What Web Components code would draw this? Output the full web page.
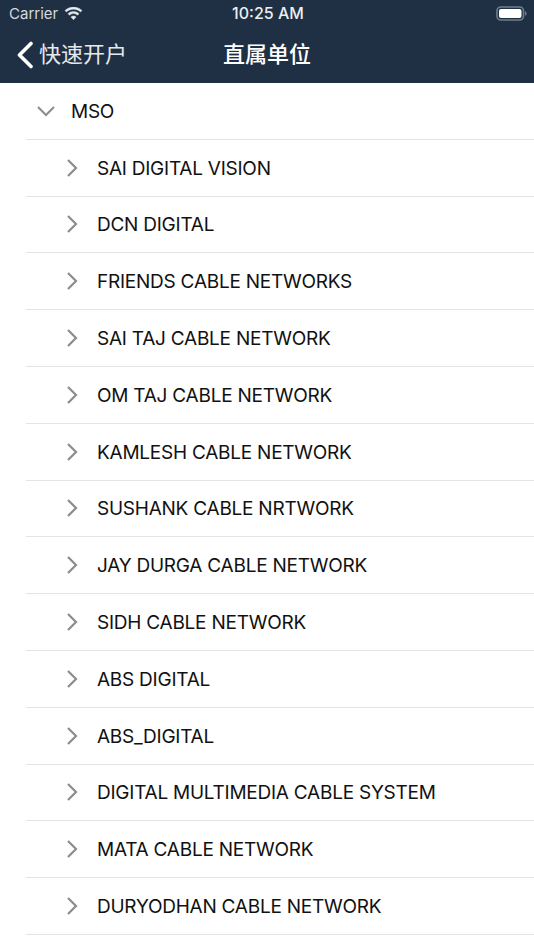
<!DOCTYPE html>
<html>
<head>
<meta charset="utf-8">
<style>
  html, body { margin: 0; background: #fff; }
  body { font-family: Inter, "Noto Sans CJK SC", sans-serif; height: 950px; overflow: hidden; }
</style>
</head>
<body>
<app-header title="直属单位" back="快速开户"></app-header>
<tree-list>
  <tree-row level="0" open>MSO</tree-row>
  <tree-row>SAI DIGITAL VISION</tree-row>
  <tree-row>DCN DIGITAL</tree-row>
  <tree-row>FRIENDS CABLE NETWORKS</tree-row>
  <tree-row>SAI TAJ CABLE NETWORK</tree-row>
  <tree-row>OM TAJ CABLE NETWORK</tree-row>
  <tree-row>KAMLESH CABLE NETWORK</tree-row>
  <tree-row>SUSHANK CABLE NRTWORK</tree-row>
  <tree-row>JAY DURGA CABLE NETWORK</tree-row>
  <tree-row>SIDH CABLE NETWORK</tree-row>
  <tree-row>ABS DIGITAL</tree-row>
  <tree-row>ABS_DIGITAL</tree-row>
  <tree-row>DIGITAL MULTIMEDIA CABLE SYSTEM</tree-row>
  <tree-row>MATA CABLE NETWORK</tree-row>
  <tree-row>DURYODHAN CABLE NETWORK</tree-row>
</tree-list>
<script>
class AppHeader extends HTMLElement {
  connectedCallback() {
    this.attachShadow({ mode: 'open' });
    this.shadowRoot.innerHTML = `
      <style>
        :host { display: block; height: 83px; background: #1f3044; color: #fff; }
        .status { height: 26px; display: grid; grid-template-columns: 1fr auto 1fr; align-items: center; padding: 0 7px 0 9px; font-size: 16px; }
        .left { display: flex; align-items: center; gap: 6px; color: #d5dade; font-size: 15px; }
        .left svg { margin-top: 2px; }
        .time { font-weight: 500; color: #eceef0; }
        .right { display: flex; justify-content: flex-end; }
        .nav { height: 57px; display: grid; grid-template-columns: 1fr auto 1fr; align-items: center; padding: 0 16px; }
        .back { display: flex; align-items: center; gap: 3px; font-size: 22px; color: #e6e9ec; }
        .back span, .title { padding-bottom: 6px; }
        .title { font-size: 22px; font-weight: 500; }
        svg { display: block; }
      </style>
      <div class="status">
        <div class="left">Carrier
          <svg width="19" height="14" viewBox="0 0 19 14"><path fill="#e8ebed" stroke="#e8ebed" stroke-width=".4" d="M9.5 2.2c2.7 0 5.2 1 7.1 2.8l1.4-1.5C15.700 1.300 12.700 0 9.500 0S3.300 1.300 1 3.500L2.400 5C4.300 3.200 6.800 2.200 9.500 2.200zM9.500 6.600c1.500 0 2.900.6 4 1.600l1.500-1.500C13.500 5.300 11.600 4.500 9.500 4.500s-4 .8-5.500 2.200l1.500 1.500c1.100-1 2.500-1.600 4-1.600zM9.500 9c-1 0-1.900.4-2.600 1l2.600 2.800L12.100 10c-.7-.6-1.600-1-2.600-1z"/></svg>
        </div>
        <div class="time">10:25 AM</div>
        <div class="right">
          <svg width="31" height="15" viewBox="0 0 31 15"><rect x="1" y="1" width="26.500" height="13" rx="3.800" fill="none" stroke="#6f7d8c" stroke-width="1.600"/><rect x="3" y="3" width="22.500" height="9" rx="2" fill="#fff"/><path d="M29 5.200c1 .3 1.500 1.200 1.500 2.300s-.5 2-1.500 2.300z" fill="#6f7d8c"/></svg>
        </div>
      </div>
      <div class="nav">
        <div class="back">
          <svg width="20" height="28" viewBox="0 0 20 28"><path d="M15 2.500 3.500 14 15 25.500" fill="none" stroke="#fff" stroke-width="3.600" stroke-linecap="round" stroke-linejoin="round"/></svg>
          <span>${this.getAttribute('back')}</span>
        </div>
        <div class="title">${this.getAttribute('title')}</div>
        <div></div>
      </div>`;
  }
}

class TreeList extends HTMLElement {
  connectedCallback() {
    this.attachShadow({ mode: 'open' });
    this.shadowRoot.innerHTML = `
      <style>
        :host { display: block; padding-left: 26px; }
      </style>
      <slot></slot>`;
  }
}

class TreeRow extends HTMLElement {
  connectedCallback() {
    const top = this.getAttribute('level') === '0';
    const icon = this.hasAttribute('open')
      ? '<svg width="20" height="12" viewBox="0 0 20 12"><path d="M2 2l8 8 8-8" fill="none" stroke="#8c8c8c" stroke-width="2"/></svg>'
      : '<svg width="12" height="20" viewBox="0 0 12 20"><path d="M2 2l8 8-8 8" fill="none" stroke="#8c8c8c" stroke-width="2.200"/></svg>';
    this.attachShadow({ mode: 'open' });
    this.shadowRoot.innerHTML = `
      <style>
        :host { display: block; height: 56.800px; box-sizing: border-box; border-bottom: 1px solid #e4e4e4; }
        .row { height: 100%; display: flex; align-items: center; color: #111; font-size: 19px; letter-spacing: -0.240px; }
        .icon { width: 20px; display: flex; justify-content: center; flex: none; }
        .label { padding-top: 1px; }
        .row.l0 { padding-left: 10px; gap: 15px; }
        .row.l1 { padding-left: 36px; gap: 15px; }
        svg { display: block; }
      </style>
      <div class="row ${top ? 'l0' : 'l1'}">
        <span class="icon">${icon}</span>
        <span class="label"><slot></slot></span>
      </div>`;
  }
}

customElements.define('app-header', AppHeader);
customElements.define('tree-list', TreeList);
customElements.define('tree-row', TreeRow);
</script>
</body>
</html>
